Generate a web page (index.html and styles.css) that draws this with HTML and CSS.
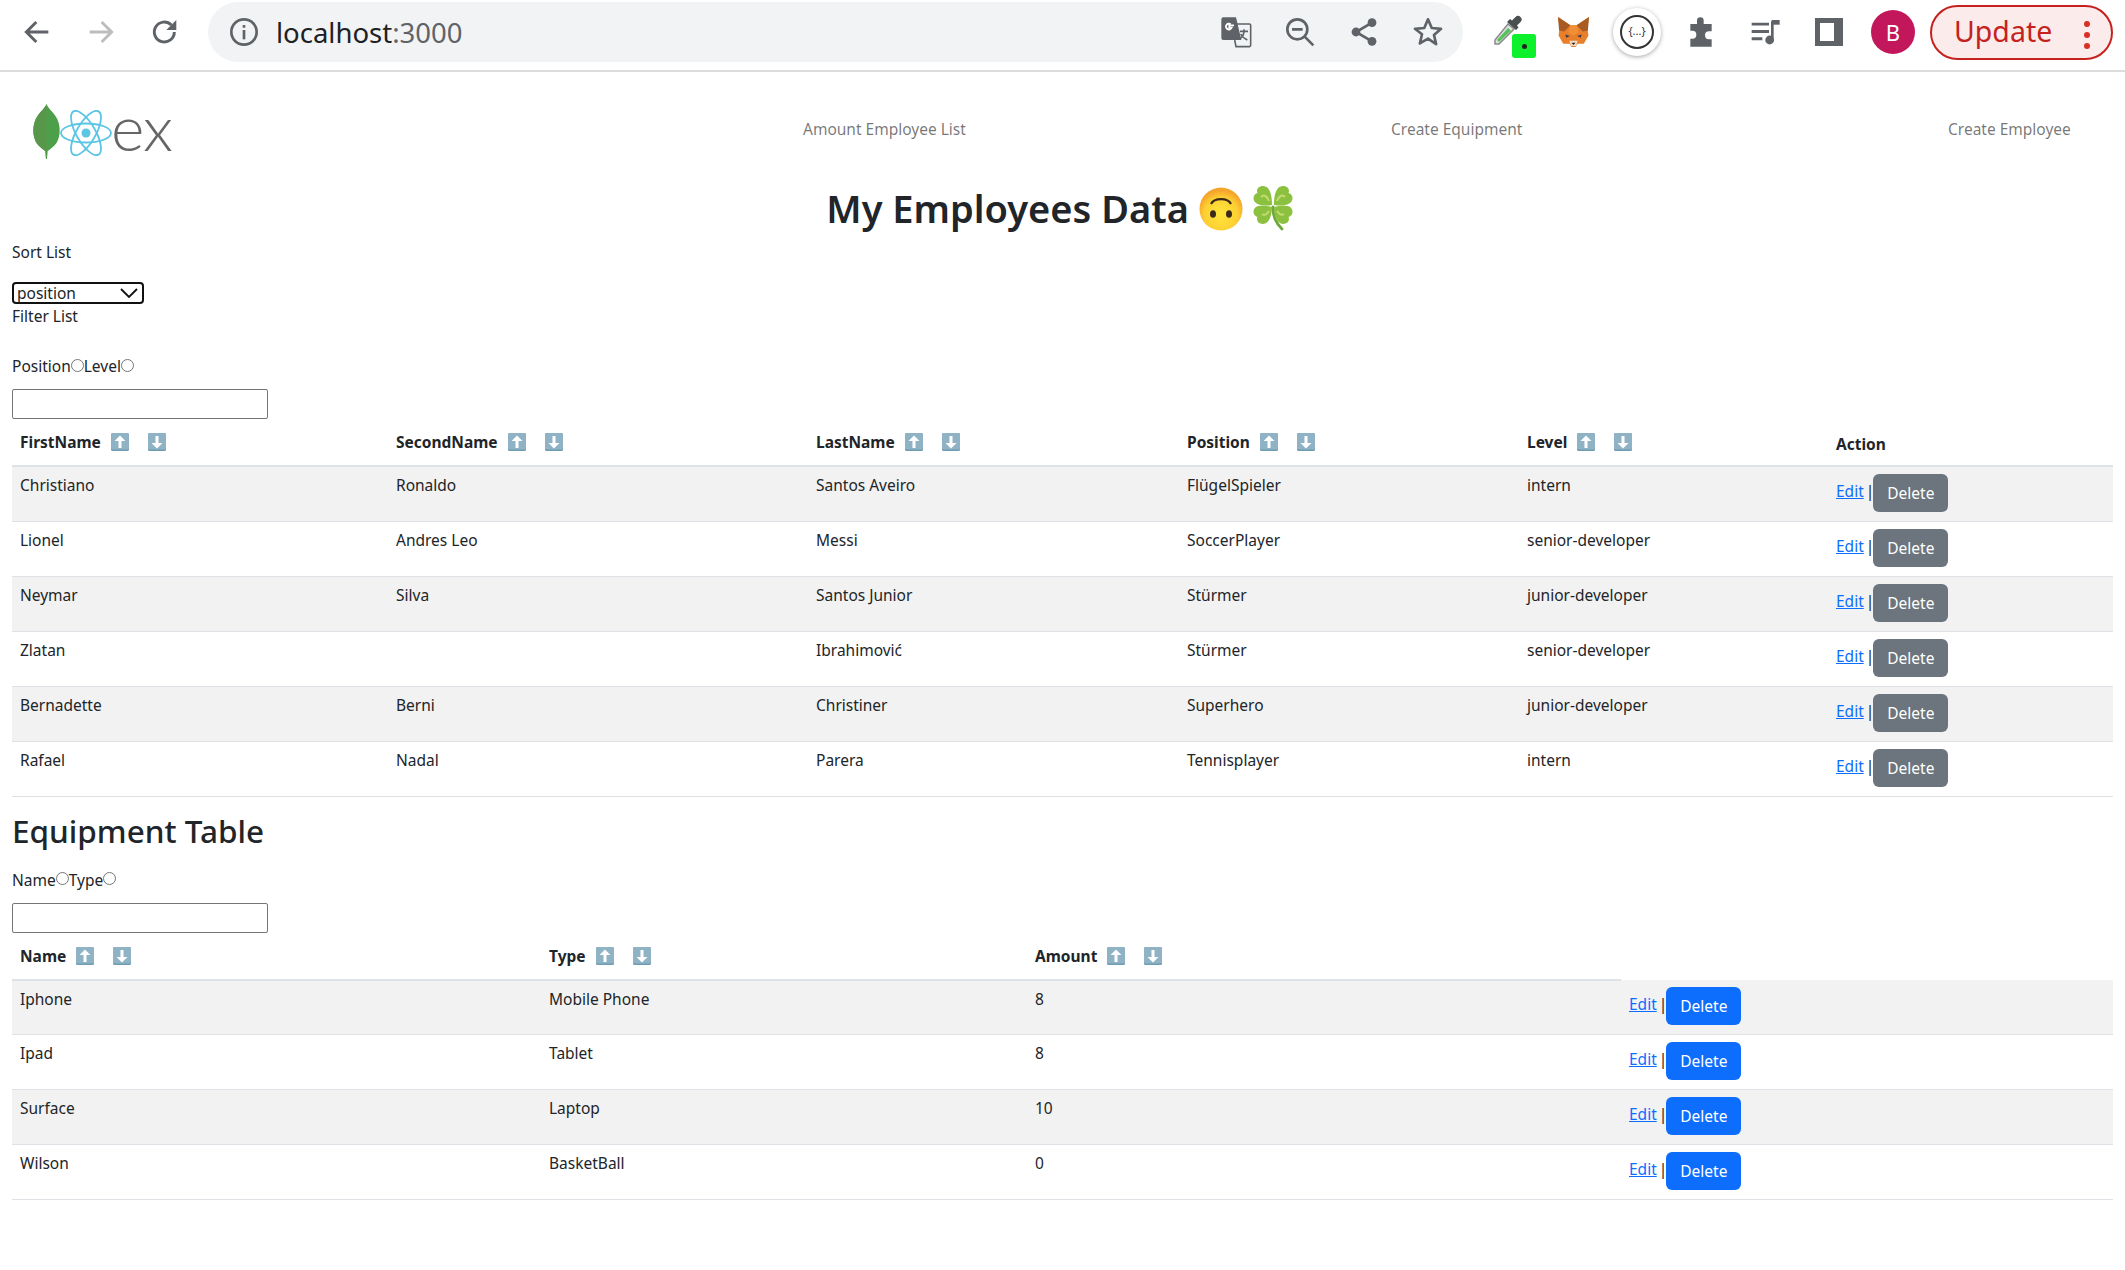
FILE: index.html
```html
<!DOCTYPE html>
<html>
<head>
    <meta charset="utf-8">
    <meta name="viewport" content="width=device-width, initial-scale=1">
    <title>My Employees Data</title>
    <link rel="stylesheet" href="styles.css">
</head>
<body>
<svg class="defs" width="0" height="0">
    <symbol id="up" viewBox="0 0 18 18">
        <rect width="18" height="18" rx="1.5" fill="#6f9cb2"/>
        <rect width="18" height="16.5" rx="1.5" fill="#8fb3c5"/>
        <path d="M9 2.500 3.500 8H7.500V15H10.500V8H14.500Z" fill="#fff"/>
    </symbol>
    <symbol id="down" viewBox="0 0 18 18">
        <rect width="18" height="18" rx="1.5" fill="#6f9cb2"/>
        <rect width="18" height="16.5" rx="1.5" fill="#8fb3c5"/>
        <path d="M9 15.500 3.500 10H7.500V3H10.500V10H14.500Z" fill="#fff"/>
    </symbol>
</svg>

<div class="toolbar">
    <div class="nav-icons">
        <svg class="tb-icon" viewBox="0 0 24 24"><path d="M20.5 12H4.500M11.500 4.500 4 12l7.500 7.500" fill="none" stroke="#5f6368" stroke-width="2.200"/></svg>
        <svg class="tb-icon" viewBox="0 0 24 24"><path d="M3.500 12H19.500M12.500 4.500 20 12l-7.500 7.500" fill="none" stroke="#bdbdbd" stroke-width="2.200"/></svg>
        <svg class="tb-icon" viewBox="0 0 24 24"><path d="M19 12a7.500 7.500 0 1 1-2.200-5.300" fill="none" stroke="#5f6368" stroke-width="2.200"/><path d="M20.500 3v7.500H13Z" fill="#5f6368"/></svg>
    </div>
    <div class="omnibox">
        <svg class="info-icon" viewBox="0 0 24 24"><circle cx="12" cy="12" r="9.500" fill="none" stroke="#5f6368" stroke-width="2"/><rect x="11" y="10.500" width="2" height="7" fill="#5f6368"/><rect x="11" y="6.800" width="2" height="2" fill="#5f6368"/></svg>
        <div class="url">localhost<span class="url-port">:3000</span></div>
        <div class="omni-actions">
            <svg class="omni-icon" viewBox="0 0 24 24"><path d="M9 6h13a1 1 0 0 1 1 1v15a1 1 0 0 1-1 1H12l-1-5" fill="#f1f3f4" stroke="#5f6368" stroke-width="1.200"/><path d="M1 2.500A1.500 1.500 0 0 1 2.500 1H12l4 17H2.500A1.500 1.500 0 0 1 1 16.500Z" fill="#5f6368"/><path d="M10.500 7H7v1.800h1.700a2.200 2.200 0 1 1-.7-2.700" fill="none" stroke="#fff" stroke-width="1.400"/><path d="M15 11.500h6M18 10v1.500c0 3-2 5-3.500 6M15.500 13.500c1 2 3 3.500 5 4.500" fill="none" stroke="#5f6368" stroke-width="1.200"/></svg>
            <svg class="omni-icon" viewBox="0 0 24 24"><circle cx="10" cy="10" r="7.500" fill="none" stroke="#5f6368" stroke-width="2"/><path d="M6 10h8M15.500 15.500 22 22" fill="none" stroke="#5f6368" stroke-width="2"/></svg>
            <svg class="omni-icon" viewBox="0 0 24 24"><path d="M18 5 6 12l12 7" fill="none" stroke="#5f6368" stroke-width="2"/><circle cx="18" cy="5" r="3.300" fill="#5f6368"/><circle cx="6" cy="12" r="3.300" fill="#5f6368"/><circle cx="18" cy="19" r="3.300" fill="#5f6368"/></svg>
            <svg class="omni-icon" viewBox="0 0 24 24"><path d="M12 2.500l2.800 6.500 7 .6-5.300 4.600 1.600 6.900L12 17l-6.100 3.600 1.600-6.900L2.200 9.600l7-.6Z" fill="none" stroke="#5f6368" stroke-width="2" stroke-linejoin="round"/></svg>
        </div>
    </div>
    <div class="extensions">
        <div class="ext-cell ext-dropper">
            <svg class="dropper-svg" viewBox="0 0 32 32"><path d="M2 27 15 11l6 5L6 31H2Z" fill="#dfe3df" stroke="#8a8a8a" stroke-width="1.500"/><path d="M4 27 15 15l3 2.500L6 29Z" fill="#55c25a"/><path d="M14 9l9 8 2.500-2.500-1.500-2 3.500-3.500a3.500 3.500 0 0 0-5-5l-3.500 3.500-2-1.500Z" fill="#4a4f4f"/></svg>
            <span class="ext-badge"><span class="ext-badge-dot"></span></span>
        </div>
        <div class="ext-cell">
            <svg class="fox" viewBox="0 0 32 32"><path d="M1 1 13 9h6L31 1l-1.500 11 1 7-4.500 8-6 0-2 3h-4l-2-3-6 0-4.500-8 1-7Z" fill="#e8802b"/><path d="M1 1l12 8-6 6-5-1Z M31 1 19 9l6 6 5-1Z" fill="#a85b22"/><path d="M13 9h6l2 7-5 3-5-3Z" fill="#f08f36"/><path d="M12 24h8l-1.500 5h-5Z" fill="#f3dcc6"/><path d="M14 26h4l-2 2Z" fill="#2d2118"/><path d="M8 18l4.500 1.500L9 21Z M24 18l-4.500 1.500L23 21Z" fill="#3b3b46"/></svg>
        </div>
        <div class="ext-cell">
            <div class="ext-json"><div class="ext-json-ring">{...}</div></div>
        </div>
        <div class="ext-cell">
            <svg class="tb-icon" viewBox="0 0 24 24"><path d="M9 3.500a2.500 2.500 0 0 1 5 0V6h6v5.500h-2a3 3 0 0 0 0 6h2V23H4v-6h1.500a3 3 0 0 0 0-6H4V6h5Z" fill="#5f6368"/></svg>
        </div>
        <div class="ext-cell">
            <svg class="tb-icon" viewBox="0 0 24 24"><path d="M2 5h13v2.200H2ZM2 10.500h13v2.200H2ZM2 16h8v2.200H2Z" fill="#5f6368"/><path d="M17.500 4v13" fill="none" stroke="#5f6368" stroke-width="2"/><path d="M17 3h6v3.500h-6Z" fill="#5f6368"/><circle cx="15.500" cy="18" r="3.300" fill="#5f6368"/></svg>
        </div>
        <div class="ext-cell">
            <svg class="panel-icon" viewBox="0 0 28 28"><path d="M0 0h28v28H0Z" fill="#5f6368"/><path d="M5 5h14v18H5Z" fill="#fff"/></svg>
        </div>
        <div class="ext-cell"><div class="avatar">B</div></div>
        <div class="update">Update<span class="update-dots"></span></div>
    </div>
</div>

<div class="page">
    <nav class="topnav">
        <div class="logo">
            <svg width="27" height="55" viewBox="0 0 27 55"><path d="M13.500 0C12 4 8 7 4.500 12-1 20-.8 32 3.500 39c2.500 3.500 6 6 8.800 8l.7 8h1l.7-8c2.800-2 6.300-4.500 8.800-8 4.300-7 4.500-19-1-27C19 7 15 4 13.500 0Z" fill="#4e9f4a"/><path d="M13.500 0C12 4 8 7 4.500 12-1 20-.8 32 3.500 39c2.500 3.500 6 6 8.800 8l.7 8h.5Z" fill="#58964a"/></svg>
            <svg class="logo-atom" width="52" height="46" viewBox="-26 -23 52 46" fill="none" stroke="#5bc5e4" stroke-width="1.800"><ellipse rx="25" ry="9.500"/><ellipse rx="25" ry="9.500" transform="rotate(60)"/><ellipse rx="25" ry="9.500" transform="rotate(120)"/><circle r="4.500" fill="#5bc5e4" stroke="none"/></svg>
            <span class="logo-ex">ex</span>
        </div>
        <a class="navlink">Amount Employee List</a>
        <a class="navlink">Create Equipment</a>
        <a class="navlink">Create Employee</a>
    </nav>

    <h1 class="title">My Employees Data
        <svg class="emoji" viewBox="0 0 44 44"><defs><radialGradient id="face" cx="50%" cy="62%" r="55%"><stop offset="0" stop-color="#ffe63b"/><stop offset="0.7" stop-color="#fdd033"/><stop offset="1" stop-color="#f6a52c"/></radialGradient></defs><circle cx="22" cy="22" r="21.500" fill="url(#face)"/><path d="M12 17c3-6.500 17-6.500 20 0" fill="none" stroke="#3b2a1a" stroke-width="2.200"/><ellipse cx="14" cy="27" rx="3" ry="3.800" fill="#3b2a1a"/><ellipse cx="30" cy="27" rx="3" ry="3.800" fill="#3b2a1a"/></svg>
        <svg class="emoji clover" viewBox="0 0 40 46"><path d="M20 22c0 9 2 15 9 22" fill="none" stroke="#6fa83a" stroke-width="2.800" stroke-linecap="round"/><g fill="#8bc13f"><path d="M19 20C19 10 17 1 10 1 5 1 3 5 4.500 8 0 9-1 15 3 18c4 3 11 3 16 2Z"/><path d="M21 20C21 10 23 1 30 1c5 0 7 4 5.500 7 4.500 1 5.500 7 1.500 10-4 3-11 3-16 2Z"/><path d="M19 22c0 8-3 17-9 17-5 0-7-4-5.500-7C0 31-1 25 3 22c4-2 11-1 16 0Z"/><path d="M21 22c0 8 3 17 9 17 5 0 7-4 5.500-7 4.500-1 5.500-7 1.500-10-4-2-11-1-16 0Z"/></g><g fill="none" stroke="#c3dc72" stroke-width="2"><path d="M8 12c3-3 6-1 8 4M32 12c-3-3-6-1-8 4M9 29c3 2 5 0 7-3M31 29c-3 2-5 0-7-3"/></g></svg>
    </h1>

    <div class="label-row sort-label">Sort List</div>
    <div class="select-row">
        <div class="fake-select">position
            <svg class="select-arrow" width="18" height="10" viewBox="0 0 18 10"><path d="M1 1l8 8 8-8" fill="none" stroke="#111" stroke-width="1.800"/></svg>
        </div>
    </div>
    <div class="label-row">Filter List</div>
    <div class="label-row radio-row emp-radios">Position<span class="radio"></span>Level<span class="radio"></span></div>
    <div class="search-box"></div>

    <table class="grid emp-table">
        <thead>
            <tr>
                <th class="c-first">FirstName<span class="sort"><svg><use href="#up"/></svg><svg><use href="#down"/></svg></span></th>
                <th class="c-second">SecondName<span class="sort"><svg><use href="#up"/></svg><svg><use href="#down"/></svg></span></th>
                <th class="c-last">LastName<span class="sort"><svg><use href="#up"/></svg><svg><use href="#down"/></svg></span></th>
                <th class="c-pos">Position<span class="sort"><svg><use href="#up"/></svg><svg><use href="#down"/></svg></span></th>
                <th class="c-level">Level<span class="sort"><svg><use href="#up"/></svg><svg><use href="#down"/></svg></span></th>
                <th class="action-head">Action</th>
            </tr>
        </thead>
        <tbody>
            <tr><td>Christiano</td><td>Ronaldo</td><td>Santos Aveiro</td><td>FlügelSpieler</td><td>intern</td><td><a class="edit">Edit</a> | <button class="btn grey">Delete</button></td></tr>
            <tr><td>Lionel</td><td>Andres Leo</td><td>Messi</td><td>SoccerPlayer</td><td>senior-developer</td><td><a class="edit">Edit</a> | <button class="btn grey">Delete</button></td></tr>
            <tr><td>Neymar</td><td>Silva</td><td>Santos Junior</td><td>Stürmer</td><td>junior-developer</td><td><a class="edit">Edit</a> | <button class="btn grey">Delete</button></td></tr>
            <tr><td>Zlatan</td><td></td><td>Ibrahimović</td><td>Stürmer</td><td>senior-developer</td><td><a class="edit">Edit</a> | <button class="btn grey">Delete</button></td></tr>
            <tr><td>Bernadette</td><td>Berni</td><td>Christiner</td><td>Superhero</td><td>junior-developer</td><td><a class="edit">Edit</a> | <button class="btn grey">Delete</button></td></tr>
            <tr><td>Rafael</td><td>Nadal</td><td>Parera</td><td>Tennisplayer</td><td>intern</td><td><a class="edit">Edit</a> | <button class="btn grey">Delete</button></td></tr>
        </tbody>
    </table>

    <h2 class="subtitle">Equipment Table</h2>
    <div class="label-row radio-row">Name<span class="radio"></span>Type<span class="radio"></span></div>
    <div class="search-box"></div>

    <table class="grid eq-table">
        <thead>
            <tr>
                <th class="e-name">Name<span class="sort"><svg><use href="#up"/></svg><svg><use href="#down"/></svg></span></th>
                <th class="e-type">Type<span class="sort"><svg><use href="#up"/></svg><svg><use href="#down"/></svg></span></th>
                <th class="e-amount">Amount<span class="sort"><svg><use href="#up"/></svg><svg><use href="#down"/></svg></span></th>
                <th class="e-empty"></th>
            </tr>
        </thead>
        <tbody>
            <tr><td>Iphone</td><td>Mobile Phone</td><td>8</td><td><a class="edit">Edit</a> | <button class="btn blue">Delete</button></td></tr>
            <tr><td>Ipad</td><td>Tablet</td><td>8</td><td><a class="edit">Edit</a> | <button class="btn blue">Delete</button></td></tr>
            <tr><td>Surface</td><td>Laptop</td><td>10</td><td><a class="edit">Edit</a> | <button class="btn blue">Delete</button></td></tr>
            <tr><td>Wilson</td><td>BasketBall</td><td>0</td><td><a class="edit">Edit</a> | <button class="btn blue">Delete</button></td></tr>
        </tbody>
    </table>
</div>
</body>
</html>
```

FILE: styles.css
```css
* {
    box-sizing: border-box;
}
html, body {
    margin: 0;
    padding: 0;
}
body {
    font-family: "Noto Sans", sans-serif;
    font-size: 15px;
    color: #212529;
    background: #fff;
    overflow: hidden;
    height: 1270px;
}
.defs {
    display: none;
}

/* browser bar */
.toolbar {
    height: 72px;
    border-bottom: 2px solid #dcdcdc;
    display: flex;
    align-items: center;
    padding-bottom: 6px;
}
.nav-icons {
    display: flex;
    gap: 32px;
    padding-left: 21px;
    width: 208px;
}
.tb-icon {
    width: 32px;
    height: 32px;
    flex: none;
}
.omnibox {
    width: 1255px;
    height: 60px;
    border-radius: 30px;
    background: #f1f3f4;
    display: flex;
    align-items: center;
    padding-left: 20px;
}
.info-icon {
    width: 32px;
    height: 32px;
}
.url {
    margin-left: 16px;
    font-size: 27.5px;
    color: #202124;
}
.url-port {
    color: #5f6368;
}
.omni-actions {
    margin-left: auto;
    display: flex;
    gap: 32px;
    padding-right: 19px;
}
.omni-icon {
    width: 32px;
    height: 32px;
}
.extensions {
    display: flex;
    align-items: center;
    padding-left: 14px;
}
.ext-cell {
    width: 64px;
    display: flex;
    justify-content: center;
    align-items: center;
}
.ext-dropper {
    position: relative;
    height: 44px;
}
.dropper-svg {
    width: 32px;
    height: 32px;
    margin-top: -6px;
}
.fox {
    width: 33px;
    height: 33px;
}
.panel-icon {
    width: 28px;
    height: 28px;
}
.ext-badge {
    position: absolute;
    left: 35px;
    top: 24px;
    width: 24px;
    height: 24px;
    border-radius: 3px;
    background: #0cf12c;
    display: flex;
    align-items: center;
    justify-content: center;
}
.ext-badge-dot {
    width: 5px;
    height: 5px;
    border-radius: 50%;
    background: #222;
}
.ext-json {
    width: 48px;
    height: 48px;
    border-radius: 50%;
    background: #fff;
    box-shadow: 0 1px 4px rgba(0, 0, 0, 0.35);
    display: flex;
    align-items: center;
    justify-content: center;
}
.ext-json-ring {
    width: 34px;
    height: 34px;
    border: 2px solid #333;
    border-radius: 50%;
    font-size: 11px;
    text-align: center;
    line-height: 28px;
    color: #333;
}
.avatar {
    width: 44px;
    height: 44px;
    border-radius: 50%;
    background: #c2185b;
    color: #fff;
    font-size: 22px;
    text-align: center;
    line-height: 44px;
}
.update {
    width: 183px;
    height: 55px;
    margin-left: 5px;
    border: 2px solid #c5221f;
    border-radius: 28px;
    background: #fbeceb;
    color: #c5221f;
    font-size: 28.5px;
    line-height: 48px;
    padding-left: 22px;
    position: relative;
}
.update-dots {
    position: absolute;
    right: 21px;
    top: 14px;
    width: 6px;
    height: 6px;
    border-radius: 50%;
    background: #d93025;
    box-shadow: 0 11px 0 #d93025, 0 22px 0 #d93025;
}

/* page */
.page {
    padding: 0 12px;
}
.topnav {
    display: grid;
    grid-template-columns: 791px 588px 557px auto;
    align-items: center;
    height: 88px;
    padding-top: 30px;
}
.logo {
    display: flex;
    align-items: center;
    padding-left: 21px;
}
.logo-atom {
    margin-top: 4px;
}
.logo-ex {
    font-family: "Lato", sans-serif;
    font-weight: 300;
    font-size: 64px;
    line-height: 50px;
    letter-spacing: -1px;
    color: #666;
    margin-top: -8px;
    margin-left: -1px;
}
.navlink {
    color: rgba(0, 0, 0, 0.55);
    font-size: 15.5px;
    margin-top: -4px;
}
.title {
    font-size: 38px;
    font-weight: 600;
    text-align: center;
    margin: 18px 0 0;
    padding-right: 6px;
    line-height: 60px;
    height: 60px;
}
.emoji {
    width: 44px;
    height: 44px;
    vertical-align: -8px;
}
.clover {
    width: 40px;
    height: 46px;
}
.label-row {
    line-height: 24px;
    font-size: 15.5px;
}
.sort-label {
    margin-top: 2px;
}
.select-row {
    margin-top: 18px;
    height: 22px;
}
.fake-select {
    width: 132px;
    height: 22px;
    border: 2px solid #111;
    border-radius: 4px;
    font-size: 15.5px;
    line-height: 18px;
    padding-left: 3px;
    position: relative;
}
.select-arrow {
    position: absolute;
    right: 4px;
    top: 4px;
}
.radio-row {
    display: flex;
    align-items: center;
}
.emp-radios {
    margin-top: 26px;
}
.radio {
    width: 13px;
    height: 13px;
    border: 1px solid #767676;
    border-radius: 50%;
    margin-top: -2px;
}
.search-box {
    width: 256px;
    height: 30px;
    margin-top: 11px;
    border: 1px solid #767676;
    border-radius: 2px;
}

/* tables */
.grid {
    width: 2101px;
    table-layout: fixed;
    border-collapse: collapse;
    font-size: 15.5px;
}
.grid th {
    text-align: left;
    padding: 8px;
    height: 47px;
    font-weight: 700;
    border-bottom: 2px solid #dee2e6;
    white-space: nowrap;
    line-height: 20px;
}
.grid td {
    padding: 7px 8px;
    height: 55px;
    vertical-align: top;
    border-bottom: 1px solid #dee2e6;
    line-height: 22px;
}
.grid tbody tr:nth-child(odd) td {
    background: #f2f2f2;
}
.sort {
    display: inline-flex;
    gap: 19px;
    margin-left: 10px;
    vertical-align: -3px;
}
.sort svg {
    width: 18px;
    height: 18px;
    display: block;
}
.c-first {
    width: 376px;
}
.c-second {
    width: 420px;
}
.c-last {
    width: 371px;
}
.c-pos {
    width: 340px;
}
.c-level {
    width: 309px;
}
.grid .action-head {
    padding-top: 12px;
}
.edit {
    color: #0d6efd;
    text-decoration: underline;
    margin-right: -2px;
}
.btn {
    font-family: inherit;
    font-size: 15.5px;
    color: #fff;
    border: 0;
    border-radius: 6px;
    height: 38px;
    width: 75px;
    padding: 0;
    margin-left: -5px;
    vertical-align: middle;
}
.grey {
    background: #6c757d;
}
.blue {
    background: #0d6efd;
}
.subtitle {
    font-size: 31.5px;
    font-weight: 500;
    line-height: 39px;
    margin: 14px 0 0;
}
.subtitle + .radio-row {
    margin-top: 18px;
}
.e-name {
    width: 529px;
}
.e-type {
    width: 486px;
}
.e-amount {
    width: 594px;
}
.grid .e-empty {
    border-bottom: 0;
}
```
